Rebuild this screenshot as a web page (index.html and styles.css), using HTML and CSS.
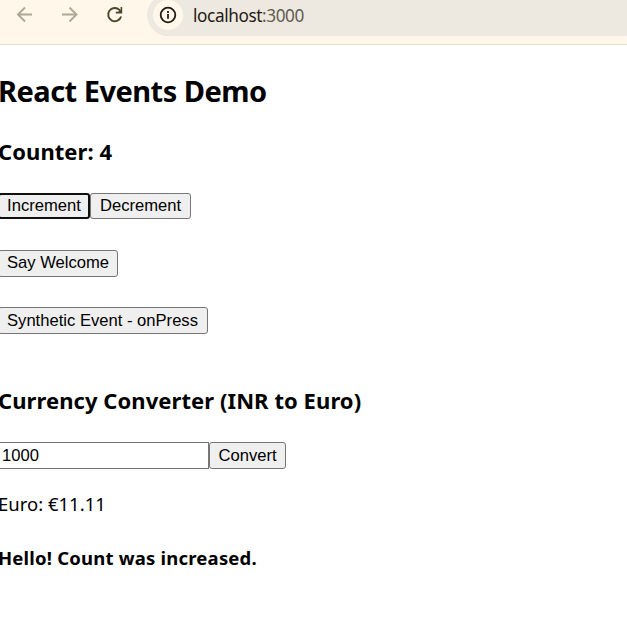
FILE: index.html
```html
<!DOCTYPE html>
<html lang="en">
<head>
<meta charset="utf-8">
<title>React Events Demo</title>
<link rel="stylesheet" href="styles.css">
</head>
<body>
<header class="toolbar">
  <svg class="nav muted" viewBox="0 0 20 20"><path d="M17 9.5H3.5M10 2.5L3 9.5l7 7"/></svg>
  <svg class="nav muted" viewBox="0 0 20 20"><path d="M2 9.5H16M9.5 2.5l7 7-7 7"/></svg>
  <svg class="nav" viewBox="0 0 20 20"><path d="M16.1 11.5A6.6 6.6 0 1 1 14.4 4.9L15.8 6.3"/><path class="head" d="M17.2 2V8.4H10.8V6.8L13.6 6.6L15.6 5V2Z"/></svg>
  <div class="address">
    <span class="info"><svg viewBox="0 0 18 18"><circle cx="9" cy="9" r="7.3"/><path d="M9 8v4.8M9 5v2"/></svg></span>
    <span class="url">localhost<span class="port">:3000</span></span>
  </div>
</header>
<main class="app">
  <h2 class="title">React Events Demo</h2>
  <h3 class="counter">Counter: 4</h3>
  <div class="row"><button class="btn low increment focused">Increment</button><button class="btn low decrement">Decrement</button></div>
  <div class="row"><button class="btn welcome">Say Welcome</button></div>
  <div class="row"><button class="btn low synthetic">Synthetic Event - onPress</button></div>
  <h3 class="converter">Currency Converter (INR to Euro)</h3>
  <div class="row"><input class="amount" type="text" value="1000"><button class="btn low convert">Convert</button></div>
  <p class="result">Euro: €11.11</p>
  <h4 class="message">Hello! Count was increased.</h4>
</main>
</body>
</html>
```
FILE: styles.css
```css
* { box-sizing: border-box; }
body {
  margin: 0;
  height: 633px;
  overflow: hidden;
  background: #fff;
  color: #000;
  font-family: "Noto Sans", "Open Sans", sans-serif;
}
.toolbar {
  display: flex;
  align-items: flex-start;
  height: 45px;
  padding-left: 15px;
  background: #fff8ea;
  border-bottom: 1px solid #e8dfc9;
}
.nav {
  flex: none;
  width: 20px;
  height: 20px;
  margin: 5px 25px 0 0;
  fill: none;
  stroke: #4d452c;
  stroke-width: 1.9;
}
.muted { stroke: #aea896; }
.head { fill: #4d452c; stroke: none; }
.address {
  display: flex;
  align-items: center;
  flex: 1;
  height: 42px;
  margin: -6px 0 0 -3px;
  padding-left: 6px;
  border-radius: 21px 0 0 21px;
  background: #ede8e0;
}
.info {
  display: flex;
  align-items: center;
  justify-content: center;
  width: 30px;
  height: 30px;
  margin-right: 10px;
  border-radius: 50%;
  background: #fff8ea;
}
.info svg { width: 18px; height: 18px; fill: none; stroke: #1f1b13; stroke-width: 1.8; }
.url { font-size: 17.2px; line-height: 24px; letter-spacing: -0.4px; color: #1f1b13; margin-top: 2px; }
.port { color: #625d52; }
.app { padding-top: 26px; margin-left: -2px; }
.title, .counter, .converter, .message, .result { margin: 0; white-space: nowrap; }
.title { font-size: 29px; line-height: 40px; font-weight: 700; letter-spacing: -0.52px; }
.counter, .converter { font-size: 22px; line-height: 32px; font-weight: 700; letter-spacing: 0.07px; }
.counter { margin-top: 24px; margin-bottom: 26px; }
.converter { margin-top: 50px; margin-bottom: 26px; }
.row { display: flex; height: 27px; }
.row + .row { margin-top: 30px; }
.btn, .amount {
  height: 27px;
  font: 16.6px "Liberation Sans", sans-serif;
  color: #000;
  border: 1px solid #767676;
}
.btn { padding: 0 0 2px; border-radius: 3px; background: #efefef; white-space: nowrap; }
.low { padding-bottom: 0; }
.focused { border: 2px solid #101010; }
.increment { width: 92px; height: 26px; }
.decrement { width: 101px; height: 26px; }
.welcome { width: 120px; }
.synthetic { width: 210px; padding-right: 1px; }
.amount { width: 211px; padding: 0 3px; background: #fff; }
.convert { width: 77px; }
.result { margin-top: 21px; margin-bottom: 26px; font-size: 18.5px; line-height: 28px; }
.message { font-size: 18.5px; line-height: 28px; font-weight: 700; letter-spacing: 0.2px; }
```
